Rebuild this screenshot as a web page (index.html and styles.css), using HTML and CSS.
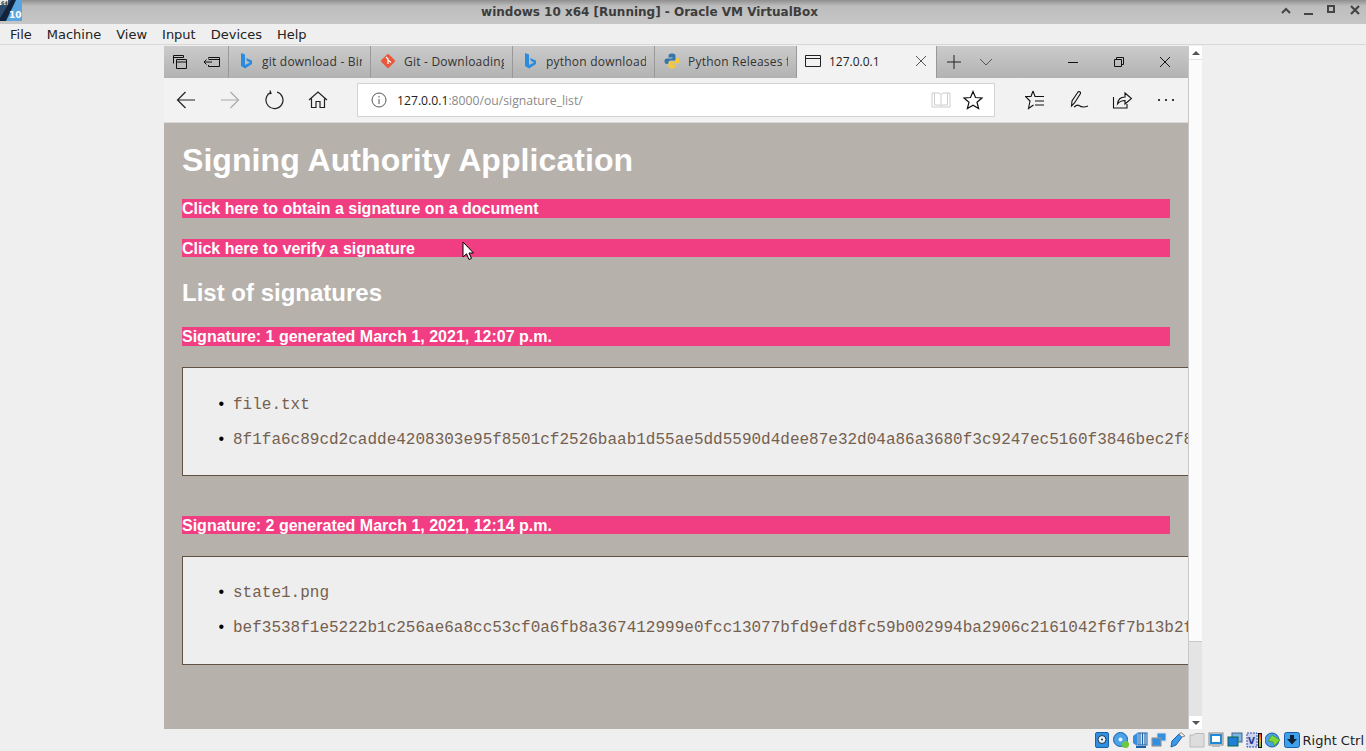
FILE: index.html
```html
<!DOCTYPE html>
<html>
    <head>
        <meta charset="utf-8">
        <title>windows 10 x64 [Running] - Oracle VM VirtualBox</title>
        <link rel="stylesheet" href="styles.css">
    </head>
    <body>
        <header class="titlebar">
            <svg class="vmlogo" width="22" height="21" viewBox="0 0 22 21">
                <rect width="22" height="21" fill="#5aa5e0"/>
                <path d="M0 0 H14 L0 19Z" fill="#2c4a6e"/>
                <path d="M11 0 H16 L6 21 H0 V18Z" fill="#12233c"/>
                <rect x="0" y="0" width="8" height="5" fill="#e8e8e8"/>
                <text x="1" y="5" class="vmlogo-small">64</text>
                <text x="9" y="18" class="vmlogo-big">10</text>
            </svg>
            <span class="titlebar-text">windows 10 x64 [Running] - Oracle VM VirtualBox</span>
            <div class="winbtns">
                <svg width="12" height="12" viewBox="0 0 12 12"><path d="M2 9 L6 5 L10 9" fill="none" stroke="#444" stroke-width="2"/></svg>
                <svg width="12" height="12" viewBox="0 0 12 12"><path d="M1 10 H10" fill="none" stroke="#444" stroke-width="2"/></svg>
                <svg width="12" height="12" viewBox="0 0 12 12"><rect x="2" y="2" width="6" height="6" fill="none" stroke="#444" stroke-width="2"/></svg>
                <svg width="12" height="12" viewBox="0 0 12 12"><path d="M2 2 L10 10 M10 2 L2 10" fill="none" stroke="#444" stroke-width="2.2"/></svg>
            </div>
        </header>

        <nav class="menubar">
            <span>File</span><span>Machine</span><span>View</span><span>Input</span><span>Devices</span><span>Help</span>
        </nav>

        <div class="vmarea">
            <div class="guest">
                <div class="tabstrip">
                    <div class="tabtools">
                        <svg width="16" height="16" viewBox="0 0 16 16"><path d="M1.5 9.5 V1.5 H11.5 V3.5 M1.5 3.5 H11.5 M4.5 14.5 V5.5 H14.5 V14.5Z M4.5 8 H14.5" fill="none" stroke="#111"/></svg>
                        <svg width="16" height="16" viewBox="0 0 16 16"><path d="M4.5 4.5 V3.5 H15.5 V12.5 H4.5 V11 M4.5 5.5 H15.5 M0 8 H8 M2.5 5.5 L0 8 L2.5 10.5" fill="none" stroke="#111"/></svg>
                    </div>
                    <div class="tab">
                        <svg class="favicon" width="16" height="18" viewBox="0 0 16 18"><path d="M3 1 L7 2.5 V13 L12 10.5 L9 9 L8 6 L14 8.5 V12 L7 16.5 L3 14Z" fill="#2a8ce0"/></svg>
                        <span class="tabtext">git download - Bing</span>
                    </div>
                    <div class="tab">
                        <svg class="favicon" width="16" height="16" viewBox="0 0 16 16"><rect x="2.6" y="2.6" width="10.8" height="10.8" rx="1.5" transform="rotate(45 8 8)" fill="#e8583a"/><path d="M6 4 L8 6 V11 M8 7 L11 9.5" fill="none" stroke="#fff" stroke-width="1.2"/></svg>
                        <span class="tabtext">Git - Downloading</span>
                    </div>
                    <div class="tab">
                        <svg class="favicon" width="16" height="18" viewBox="0 0 16 18"><path d="M3 1 L7 2.5 V13 L12 10.5 L9 9 L8 6 L14 8.5 V12 L7 16.5 L3 14Z" fill="#2a8ce0"/></svg>
                        <span class="tabtext">python download</span>
                    </div>
                    <div class="tab">
                        <svg class="favicon" width="16" height="16" viewBox="0 0 16 16"><path d="M8 0.5 C5 0.5 4.5 1.5 4.5 3 V4.5 H8.5 V5.5 H3 C1.2 5.5 0.5 6.5 0.5 8 C0.5 10 1.2 11 3 11 H4.5 V9.5 C4.5 8 5.5 7.5 7 7.5 H10 C11 7.5 11.5 7 11.5 6 V3 C11.5 1.5 11 0.5 8 0.5Z" fill="#3776ab"/><path d="M8 15.5 C11 15.5 11.5 14.5 11.5 13 V11.5 H7.5 V10.5 H13 C14.8 10.5 15.5 9.5 15.5 8 C15.5 6 14.8 5 13 5 H12 V7 C12 8 11 8.5 10 8.5 H6 C5 8.5 4.5 9 4.5 10 V13 C4.5 14.5 5 15.5 8 15.5Z" fill="#f5c93c"/></svg>
                        <span class="tabtext">Python Releases for</span>
                    </div>
                    <div class="tab tab-active">
                        <svg class="favicon" width="16" height="14" viewBox="0 0 16 14"><path d="M0.5 1.5 H15.5 V12.5 H0.5Z M0.5 4.5 H15.5" fill="none" stroke="#222"/></svg>
                        <span class="tabtext">127.0.0.1</span>
                        <svg class="tabclose" width="12" height="12" viewBox="0 0 12 12"><path d="M1 1 L11 11 M11 1 L1 11" stroke="#555"/></svg>
                    </div>
                    <div class="tabactions">
                        <svg width="16" height="16" viewBox="0 0 16 16"><path d="M8 1 V15 M1 8 H15" stroke="#222"/></svg>
                        <svg width="14" height="14" viewBox="0 0 14 14"><path d="M1 4 L7 10 L13 4" fill="none" stroke="#555"/></svg>
                    </div>
                    <div class="edgebtns">
                        <svg width="12" height="12" viewBox="0 0 12 12"><path d="M1 6.5 H11" stroke="#111"/></svg>
                        <svg width="12" height="12" viewBox="0 0 12 12"><path d="M1.5 3.5 H8.5 V10.5 H1.5Z M3.5 3.5 V1.5 H10.5 V8.5 H8.5" fill="none" stroke="#111"/></svg>
                        <svg width="12" height="12" viewBox="0 0 12 12"><path d="M1 1 L11 11 M11 1 L1 11" stroke="#111"/></svg>
                    </div>
                </div>

                <div class="toolbar">
                    <div class="navbtns">
                        <svg width="20" height="20" viewBox="0 0 20 20"><path d="M19 10 H1.5 M9.5 2 L1.5 10 L9.5 18" fill="none" stroke="#222" stroke-width="1.2"/></svg>
                        <svg width="20" height="20" viewBox="0 0 20 20"><path d="M1 10 H18.5 M10.5 2 L18.5 10 L10.5 18" fill="none" stroke="#aaa" stroke-width="1.2"/></svg>
                        <svg width="20" height="20" viewBox="0 0 20 20"><path d="M6.5 2.6 A8.5 8.5 0 1 0 13 2 M6 0.5 L7 3.5 L3.5 4" fill="none" stroke="#222" stroke-width="1.2"/></svg>
                        <svg width="20" height="20" viewBox="0 0 20 20"><path d="M1 10 L10 2 L19 10 M3.5 8.5 V17.5 H8 V11.5 H12 V17.5 H16.5 V8.5" fill="none" stroke="#222" stroke-width="1.2"/></svg>
                    </div>
                    <div class="addressbar">
                        <svg class="infoicon" width="16" height="16" viewBox="0 0 16 16"><circle cx="8" cy="8" r="7" fill="none" stroke="#555"/><path d="M8 7 V12 M8 4 V5.5" stroke="#555"/></svg>
                        <span class="url"><span class="url-host">127.0.0.1</span>:8000/ou/signature_list/</span>
                        <svg class="readicon" width="20" height="18" viewBox="0 0 20 18"><path d="M1 2 H8 L10 3.5 L12 2 H19 V16 H1Z M3.5 2 V14 H9 L10 15 M16.5 2 V14 H11 L10 15 M10 3.5 V15" fill="none" stroke="#ccc"/></svg>
                        <svg class="staricon" width="20" height="20" viewBox="0 0 20 20"><path d="M10 1.5 L12.5 7.5 L19 8 L14 12.2 L15.6 18.6 L10 15.2 L4.4 18.6 L6 12.2 L1 8 L7.5 7.5Z" fill="none" stroke="#111" stroke-width="1.2"/></svg>
                    </div>
                    <div class="hubbtns">
                        <svg width="20" height="20" viewBox="0 0 20 20"><path d="M8 1 L10 6.5 H19 M8 1 L6 6.5 H0.5 L5 11 L3.5 18.5 L8.5 15 M10 11 H19 M10 15 H19" fill="none" stroke="#111" stroke-width="1.1"/></svg>
                        <svg width="20" height="20" viewBox="0 0 20 20"><path d="M2.5 16 L3 11 L9 2 C10 1 12 2 11.5 3.5 L5.5 13 Z M5 17 C7 16 8 14 10 15.5 C12 17 14 18 19 16" fill="none" stroke="#111" stroke-width="1.1"/></svg>
                        <svg width="20" height="20" viewBox="0 0 20 20"><path d="M1.5 7 V18 H15 V14 M5.5 14 C6 9 9 7 13 7 V3 L19.5 8.5 L13 14 V10.5 C9.5 10.5 7.5 11.5 5.5 14Z" fill="none" stroke="#111" stroke-width="1.1"/></svg>
                        <svg width="20" height="20" viewBox="0 0 20 20"><circle cx="3" cy="10" r="1.1" fill="#111"/><circle cx="10" cy="10" r="1.1" fill="#111"/><circle cx="17" cy="10" r="1.1" fill="#111"/></svg>
                    </div>
                </div>

                <main class="content">
                    <h1>Signing Authority Application</h1>
                    <a class="bar bar-link" href="#">Click here to obtain a signature on a document</a>
                    <a class="bar bar-link" href="#">Click here to verify a signature</a>
                    <h2>List of signatures</h2>

                    <div class="bar">Signature: 1 generated March 1, 2021, 12:07 p.m.</div>
                    <ul class="sigbox">
                        <li>file.txt</li>
                        <li>8f1fa6c89cd2cadde4208303e95f8501cf2526baab1d55ae5dd5590d4dee87e32d04a86a3680f3c9247ec5160f3846bec2f8a1d07c3e</li>
                    </ul>

                    <div class="bar">Signature: 2 generated March 1, 2021, 12:14 p.m.</div>
                    <ul class="sigbox">
                        <li>state1.png</li>
                        <li>bef3538f1e5222b1c256ae6a8cc53cf0a6fb8a367412999e0fcc13077bfd9efd8fc59b002994ba2906c2161042f6f7b13b2f4e09a1d7</li>
                    </ul>

                    <svg class="cursor" width="13" height="20" viewBox="0 0 13 20"><path d="M1 1 V16 L4.5 12.8 L7 18.5 L9.5 17.4 L7 12 H11.5Z" fill="#fff" stroke="#000"/></svg>
                </main>
            </div>

            <div class="scrollbar">
                <div class="scroll-btn"><i class="arrow-up"></i></div>
                <div class="scroll-thumb"></div>
                <div class="scroll-track"></div>
                <div class="scroll-btn"><i class="arrow-down"></i></div>
            </div>
        </div>

        <footer class="statusbar">
            <svg width="16" height="16" viewBox="0 0 16 16"><rect x="1.5" y="0.5" width="13" height="15" rx="1.5" fill="#2f8fe0" stroke="#1a5fa8"/><circle cx="8" cy="7.5" r="4" fill="#e8f0f8" stroke="#234"/><circle cx="8" cy="7.5" r="1" fill="#234"/></svg>
            <svg width="16" height="16" viewBox="0 0 16 16"><circle cx="7.5" cy="7.5" r="7" fill="#4aa3e8" stroke="#1a5fa8"/><circle cx="7.5" cy="7.5" r="2" fill="#e8f4ff"/><circle cx="12.5" cy="12.5" r="3.5" fill="#6cc83c"/></svg>
            <svg width="16" height="16" viewBox="0 0 16 16"><path d="M1 4 L5 1 V14 L1 11Z" fill="#2f8fe0"/><rect x="6" y="1" width="9" height="12" fill="#cfe4f6" stroke="#1a5fa8"/><path d="M8 1 V13 M10.5 1 V13 M13 1 V13" stroke="#1a5fa8"/><rect x="4" y="14" width="10" height="2" fill="#1a5fa8"/></svg>
            <svg width="16" height="16" viewBox="0 0 16 16"><rect x="6" y="1" width="9" height="8" fill="#2f8fe0" stroke="#ddd"/><rect x="1" y="6" width="9" height="8" fill="#2f8fe0" stroke="#ddd"/><rect x="1" y="6" width="9" height="8" fill="none" stroke="#234" stroke-width="0.5"/></svg>
            <svg width="16" height="16" viewBox="0 0 16 16"><path d="M1 15 L2 9 L9 2 L12 5 L6 13Z" fill="#3b9ae8" stroke="#1a5fa8"/><path d="M9 2 L11 0.5 L15 4 L12 5Z" fill="#eee" stroke="#888"/></svg>
            <svg width="16" height="16" viewBox="0 0 16 16"><path d="M1 3 H5 L6 1.5 H15 V15 H1Z" fill="#ddd" stroke="#bbb"/></svg>
            <svg width="16" height="16" viewBox="0 0 16 16"><rect x="1" y="1" width="14" height="12" fill="#e8e8e8" stroke="#888"/><rect x="3" y="3" width="10" height="8" fill="#fff" stroke="#1f8ad8" stroke-width="2"/><rect x="4" y="13" width="8" height="2" fill="#bbb"/></svg>
            <svg width="16" height="16" viewBox="0 0 16 16"><rect x="5" y="1" width="10" height="9" fill="#7db4e6" stroke="#468"/><rect x="1" y="5" width="10" height="9" fill="#1f7fd8" stroke="#164"/></svg>
            <span class="vicon"><svg width="12" height="16" viewBox="0 0 12 16"><rect x="1" y="1" width="10" height="14" fill="#c8d4f0" stroke="#3a4ba8" stroke-dasharray="2 1"/><text x="2" y="12" class="vletter">V</text></svg><i class="meter"></i></span>
            <svg width="16" height="16" viewBox="0 0 16 16"><circle cx="7" cy="8" r="7" fill="#4aa3e8" stroke="#1a5fa8"/><path d="M7 3 L15 8 L9 14 L8 10 L3 9Z" fill="#7ed63c" stroke="#3a8a1a" stroke-width="0.6"/></svg>
            <svg width="16" height="16" viewBox="0 0 16 16"><rect x="0.5" y="0.5" width="15" height="15" rx="2" fill="#3fa0ee" stroke="#1a5fa8"/><path d="M6 3 H10 V7 H13 L8 12.5 L3 7 H6Z" fill="#123"/></svg>
            <span class="hostkey">Right Ctrl</span>
        </footer>
    </body>
</html>
```

FILE: styles.css
```css
html, body {
    margin: 0;
    height: 751px;
    overflow: hidden;
}
body {
    display: flex;
    flex-direction: column;
    background-color: #efefef;
    font-family: "DejaVu Sans", sans-serif;
    color: #222;
}

/* virtualbox window */
.titlebar {
    height: 24px;
    flex: none;
    display: flex;
    align-items: center;
    justify-content: center;
    position: relative;
    background: linear-gradient(#8f8f8f, #bdbdbd 25%, #c6c6c6);
    box-sizing: border-box;
    padding-right: 67px;
}
.titlebar-text {
    font-size: 12px;
    font-weight: bold;
    color: #3c3c3c;
}
.vmlogo {
    position: absolute;
    left: 0;
    top: 0;
}
.vmlogo-small {
    font: bold 5px "DejaVu Sans", sans-serif;
    fill: #333;
}
.vmlogo-big {
    font: bold 9px "DejaVu Sans", sans-serif;
    fill: #fff;
}
.winbtns {
    position: absolute;
    right: 5px;
    top: 4px;
    display: flex;
    gap: 11px;
}
.menubar {
    height: 21px;
    flex: none;
    display: flex;
    align-items: center;
    gap: 15px;
    padding-left: 10px;
    font-size: 13px;
    border-bottom: 1px solid #d8d8d8;
    box-sizing: border-box;
}
.vmarea {
    flex: 1;
    min-height: 0;
    display: flex;
    padding-left: 164px;
    padding-top: 1px;
}
.guest {
    width: 1024px;
    display: flex;
    flex-direction: column;
    font-family: "Open Sans", sans-serif;
    overflow: hidden;
}

/* edge tabs */
.tabstrip {
    height: 32px;
    flex: none;
    display: flex;
    background: linear-gradient(#cbcbcb, #b2b2b2);
    font-size: 12px;
}
.tabtools {
    width: 65px;
    flex: none;
    display: flex;
    align-items: center;
    gap: 16px;
    padding-left: 8px;
    box-sizing: border-box;
    border-right: 1px solid #999;
}
.tab {
    width: 142px;
    flex: none;
    box-sizing: border-box;
    display: flex;
    align-items: center;
    border-right: 1px solid #999;
    padding: 0 0 2px 9px;
    color: #333;
    letter-spacing: 0.22px;
}
.favicon {
    flex: none;
    margin-right: 8px;
}
.tabtext {
    white-space: nowrap;
    overflow: hidden;
    width: 100px;
}
.tab-active {
    width: 140px;
    background-color: #f2f2f2;
    padding-left: 8px;
    color: #222;
    letter-spacing: 0;
}
.tabclose {
    margin-left: 30px;
    flex: none;
}
.tab-active .tabtext {
    width: 56px;
}
.tabactions {
    display: flex;
    align-items: center;
    gap: 17px;
    padding-left: 9px;
}
.edgebtns {
    margin-left: auto;
    display: flex;
    align-items: center;
    gap: 34px;
    padding-right: 17px;
}

/* edge toolbar */
.toolbar {
    height: 44px;
    flex: none;
    display: flex;
    align-items: center;
    background-color: #f2f2f2;
    border-bottom: 1px solid #d9d9d9;
}
.navbtns {
    width: 193px;
    display: flex;
    gap: 24px;
    padding-left: 12px;
    box-sizing: border-box;
}
.addressbar {
    width: 638px;
    height: 34px;
    box-sizing: border-box;
    background-color: #fff;
    border: 1px solid #d4d4d4;
    display: flex;
    align-items: center;
    padding: 0 11px 0 13px;
    color: #8a8a8a;
}
.infoicon {
    margin-right: 10px;
}
.url {
    flex: 1;
    font-size: 12.2px;
}
.url-host {
    color: #222;
}
.readicon {
    margin-right: 12px;
}
.hubbtns {
    display: flex;
    gap: 23.5px;
    padding-left: 30px;
}

/* page */
.content {
    flex: 1;
    min-height: 0;
    position: relative;
    overflow: hidden;
    background-color: #b7b1ab;
    padding: 0 18px;
    font-family: "Liberation Sans", Arial, sans-serif;
    color: #fff;
}
h1 {
    font-size: 32px;
    line-height: 37px;
    letter-spacing: 0.07px;
    margin: 19px 0 20.2px;
}
h2 {
    font-size: 24px;
    line-height: 28px;
    margin: 22px 0 20.1px;
}
.bar {
    display: block;
    height: 18.4px;
    line-height: 19px;
    background-color: #f13d81;
    color: #fff;
    font-size: 16px;
    font-weight: bold;
    text-decoration: none;
}
.bar-link {
    margin-bottom: 21.1px;
}
.sigbox {
    width: 1100px;
    height: 109px;
    box-sizing: border-box;
    margin: 21.6px 0 39.5px;
    padding: 26.6px 0 0 50px;
    background-color: #eee;
    border: 1px solid #5f5244;
    font-family: "Liberation Mono", "Courier New", monospace;
    font-size: 16px;
    line-height: 18px;
}
.sigbox li {
    white-space: nowrap;
    color: #75604f;
    margin-bottom: 16px;
}
.sigbox li::marker {
    content: "•\00a0\00a0";
    font-family: "Liberation Sans", Arial, sans-serif;
    color: #000;
}
.cursor {
    position: absolute;
    left: 298px;
    top: 118px;
}

/* vm scrollbar */
.scrollbar {
    width: 14px;
    display: flex;
    flex-direction: column;
    background-color: #e4e4e4;
    border-left: 1px solid #c8c8c8;
    box-sizing: border-box;
}
.scroll-btn {
    height: 13px;
    flex: none;
    display: flex;
    align-items: center;
    justify-content: center;
    background-color: #fff;
}
.scroll-thumb {
    flex: 1;
    background-color: #fbfbfb;
    border-bottom: 1px solid #c8c8c8;
    margin-top: 1px;
}
.scroll-track {
    height: 74px;
    flex: none;
}
.arrow-up {
    border: 4px solid transparent;
    border-top: 0;
    border-bottom: 4px solid #555;
}
.arrow-down {
    border: 4px solid transparent;
    border-bottom: 0;
    border-top: 4px solid #555;
}

/* status bar */
.statusbar {
    height: 22px;
    flex: none;
    display: flex;
    align-items: center;
    justify-content: flex-end;
    gap: 3px;
    padding-right: 2px;
    font-size: 13px;
}
.vicon {
    display: flex;
    align-items: center;
}
.vletter {
    font: bold 9px "DejaVu Sans", sans-serif;
    fill: #2a3a98;
}
.meter {
    width: 4px;
    height: 15px;
    box-sizing: border-box;
    border: 1px solid #111;
    background: linear-gradient(#e8401c, #f2a81c 45%, #6cc83c);
}
.hostkey {
    white-space: nowrap;
}
```
